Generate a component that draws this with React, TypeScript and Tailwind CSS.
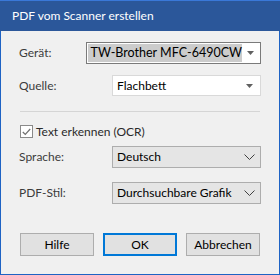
import React from 'react';

const font = { fontFamily: 'Lato, "Liberation Sans", sans-serif' };

function Triangle() {
    return (
        <svg width="7" height="4" viewBox="0 0 7 4" className="shrink-0">
            <path d="M0 0 H7 L3.5 4 Z" fill="#606060" />
        </svg>
    );
}

function Chevron() {
    return (
        <svg width="11" height="6" viewBox="0 0 11 6" className="shrink-0">
            <path d="M0.5 0.5 L5.5 5.5 L10.5 0.5" fill="none" stroke="#404040" strokeWidth="1" />
        </svg>
    );
}

function Row({ label, children, className = '' }: { label: string; children: React.ReactNode; className?: string }) {
    return (
        <div className={`flex items-center ${className}`}>
            <span className="w-[93px] text-[12px] text-[#3c3c3c]">{label}</span>
            {children}
        </div>
    );
}

export default function App() {
    return (
        <div style={font} className="w-[280px] h-[275px] bg-[#f0f0f0] border border-[#1e63c4] border-t-0 flex flex-col">
            {/* Title bar */}
            <div className="h-[31px] -mx-px bg-[#2b579a] border-t border-[#3a78d8] flex items-center pl-[12px]">
                <span className="text-[12px] text-white">PDF vom Scanner erstellen</span>
            </div>

            <div className="flex-1 flex flex-col px-[18px] pt-[11px]">
                <Row label="Gerät:">
                    <div className="flex-1 h-[22px] border border-[#7a7a7a] bg-white flex items-center p-px">
                        <div className="h-full flex-1 bg-[#cccccc] flex items-center pl-[3px] text-[12.5px] text-black whitespace-nowrap">
                            TW-Brother MFC-6490CW
                        </div>
                        <div className="w-[17px] flex justify-center">
                            <Triangle />
                        </div>
                    </div>
                </Row>

                <Row label="Quelle:" className="mt-[11px]">
                    <div className="flex-1 h-[21px] border border-[#d9d9d9] bg-white flex items-center justify-between pl-[4px] pr-[7px]">
                        <span className="text-[12px] text-black">Flachbett</span>
                        <Triangle />
                    </div>
                </Row>

                <div className="mt-[15px] h-px bg-[#d5d5d5] mx-px" />

                <label className="mt-[13px] h-[13px] flex items-center gap-[3px] pl-[1px]">
                    <span className="w-[13px] h-[13px] border border-[#8a8a8a] bg-white flex items-center justify-center">
                        <svg width="9" height="8" viewBox="0 0 9 8">
                            <path d="M0.8 4 L3.3 6.5 L8.2 1" fill="none" stroke="#707070" strokeWidth="1.2" />
                        </svg>
                    </span>
                    <span className="text-[12px] text-[#2a2a2a] whitespace-nowrap">Text erkennen (OCR)</span>
                </label>

                <Row label="Sprache:" className="mt-[8px]">
                    <div className="flex-1 h-[22px] border border-[#adadad] bg-[#e5e5e5] flex items-center justify-between pl-[4px] pr-[5px]">
                        <span className="text-[12px] text-black">Deutsch</span>
                        <Chevron />
                    </div>
                </Row>

                <Row label="PDF-Stil:" className="mt-[14px]">
                    <div className="flex-1 h-[22px] border border-[#adadad] bg-[#e5e5e5] flex items-center justify-between pl-[4px] pr-[5px]">
                        <span className="text-[12px] text-black">Durchsuchbare Grafik</span>
                        <Chevron />
                    </div>
                </Row>

                <div className="mt-[29px] flex gap-[9px] px-px">
                    <button className="w-[75px] h-[23px] border border-[#adadad] bg-[#e1e1e1] text-[12px] text-black">Hilfe</button>
                    <button className="w-[75px] h-[23px] border-2 border-[#0078d7] bg-[#e1e1e1] text-[12px] text-black">OK</button>
                    <button className="w-[75px] h-[23px] border border-[#adadad] bg-[#e1e1e1] text-[12px] text-black">Abbrechen</button>
                </div>
            </div>
        </div>
    );
}
